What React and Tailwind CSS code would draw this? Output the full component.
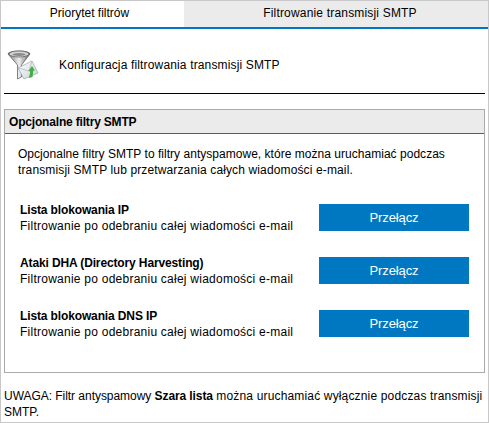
import React from "react";

function FunnelIcon() {
  return (
    <svg width="32" height="32" viewBox="0 0 32 32" className="shrink-0">
      <defs>
        <linearGradient id="fg" x1="0" x2="1" y1="0" y2="0">
          <stop offset="0" stopColor="#777" />
          <stop offset="0.5" stopColor="#eee" />
          <stop offset="1" stopColor="#666" />
        </linearGradient>
        <linearGradient id="mg" x1="0" x2="1" y1="0" y2="1">
          <stop offset="0" stopColor="#fff" />
          <stop offset="1" stopColor="#c9d3d8" />
        </linearGradient>
      </defs>
      <path d="M1 5 C1 1 23 1 23 5 L14.5 16 L14.5 28 L10.5 30 L10.5 16 Z" fill="url(#fg)" stroke="#555" strokeWidth="0.7" />
      <ellipse cx="12" cy="5" rx="10" ry="3" fill="#d5d5d5" stroke="#666" strokeWidth="0.8" />
      <ellipse cx="12" cy="5.5" rx="6.5" ry="1.5" fill="#8a8a8a" />
      <path d="M11 19 L25 12 L31 24 L17 30 Z" fill="url(#mg)" stroke="#9aa5aa" strokeWidth="0.7" />
      <path d="M11 19 L22 22 L25 12" fill="none" stroke="#a8b3b8" strokeWidth="0.7" />
      <path d="M25 17 L28 21.5 L26.3 21.5 L25.5 28 L22 29 L23.3 22.5 L21.5 22 Z" fill="#3fae3f" />
    </svg>
  );
}

const rows = ["Lista blokowania IP", "Ataki DHA (Directory Harvesting)", "Lista blokowania DNS IP"];

export default function App() {
  return (
    <div className="w-[489px] h-[423px] bg-white border border-[#c8c8c8] flex flex-col text-[12px] leading-[16px] text-black font-['Liberation_Sans',Arial,sans-serif]">
      <div className="flex h-[28px] shrink-0 border-b-2 border-[#0078c1]">
        <div className="w-[183px] bg-white flex items-center justify-center pb-[3px] pr-[6px]">Priorytet filtrów</div>
        <div className="flex-1 bg-[#ebebeb] flex items-center justify-center pb-[3px] pl-[8px] tracking-[0.18px]">Filtrowanie transmisji SMTP</div>
      </div>
      <div className="flex items-center h-[65px] shrink-0 mx-[3px] border-b border-black pl-[3px] pt-[7px]">
        <FunnelIcon />
        <span className="ml-[20px] tracking-[0.15px] mt-[1px]">Konfiguracja filtrowania transmisji SMTP</span>
      </div>
      <div className="mx-[3px] mt-[15px] h-[264px] shrink-0 border border-[#aaaaaa] flex flex-col">
        <div className="h-[24px] shrink-0 bg-[#ebebeb] border-b border-[#0078c1] flex items-center pl-[4px] font-bold tracking-[-0.18px]">Opcjonalne filtry SMTP</div>
        <div className="pl-[13px] pt-[12px]">
          <p className="tracking-[0.03px] whitespace-nowrap">Opcjonalne filtry SMTP to filtry antyspamowe, które można uruchamiać podczas</p>
          <p className="tracking-[0.13px] whitespace-nowrap">transmisji SMTP lub przetwarzania całych wiadomości e-mail.</p>
        </div>
        <div className="flex flex-col gap-[26px] mt-[26px] pl-[15px] pr-[15px]">
          {rows.map((t) => (
            <div key={t} className="flex items-center justify-between h-[27px]">
              <div>
                <div className="font-bold tracking-[-0.13px]">{t}</div>
                <div className="tracking-[0.245px]">Filtrowanie po odebraniu całej wiadomości e-mail</div>
              </div>
              <button className="w-[150px] h-[27px] bg-[#0078c1] text-white text-[13px] tracking-[-0.1px]">Przełącz</button>
            </div>
          ))}
        </div>
      </div>
      <div className="mx-[3px] mt-[15px]">
        <p className="tracking-[0.16px] whitespace-nowrap"><span className="tracking-[-0.04px]">UWAGA: Filtr antyspamowy </span><b className="tracking-[-0.1px]">Szara lista</b> można uruchamiać wyłącznie podczas transmisji</p>
        <p>SMTP.</p>
      </div>
    </div>
  );
}
